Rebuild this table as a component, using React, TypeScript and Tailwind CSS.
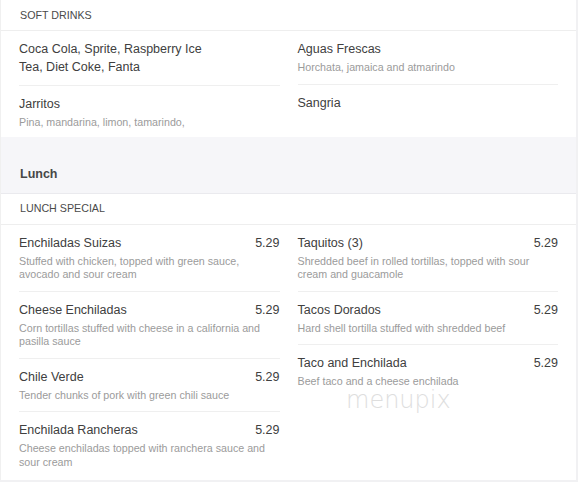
import React from 'react';

type Item = { name: string; desc?: string; price?: string };

const drinksLeft: Item[] = [
  { name: 'Coca Cola, Sprite, Raspberry Ice Tea, Diet Coke, Fanta' },
  { name: 'Jarritos', desc: 'Pina, mandarina, limon, tamarindo,' },
];

const drinksRight: Item[] = [
  { name: 'Aguas Frescas', desc: 'Horchata, jamaica and atmarindo' },
  { name: 'Sangria' },
];

const lunchLeft: Item[] = [
  { name: 'Enchiladas Suizas', price: '5.29', desc: 'Stuffed with chicken, topped with green sauce, avocado and sour cream' },
  { name: 'Cheese Enchiladas', price: '5.29', desc: 'Corn tortillas stuffed with cheese in a california and pasilla sauce' },
  { name: 'Chile Verde', price: '5.29', desc: 'Tender chunks of pork with green chili sauce' },
  { name: 'Enchilada Rancheras', price: '5.29', desc: 'Cheese enchiladas topped with ranchera sauce and sour cream' },
];

const lunchRight: Item[] = [
  { name: 'Taquitos (3)', price: '5.29', desc: 'Shredded beef in rolled tortillas, topped with sour cream and guacamole' },
  { name: 'Tacos Dorados', price: '5.29', desc: 'Hard shell tortilla stuffed with shredded beef' },
  { name: 'Taco and Enchilada', price: '5.29', desc: 'Beef taco and a cheese enchilada' },
];

function MenuItem({ item, last }: { item: Item; last: boolean }) {
  return (
    <div className={last ? 'pt-[9px] pb-[7px]' : 'pt-[9px] pb-[9px] border-b border-[#efefef]'}>
      <div className="flex justify-between text-[12.5px] leading-[18px] text-[#404040]">
        <span className="max-w-[200px]">{item.name}</span>
        {item.price && <span>{item.price}</span>}
      </div>
      {item.desc && (
        <p className="mt-[3px] text-[10.7px] leading-[13.5px] text-[#9b9b9b]">{item.desc}</p>
      )}
    </div>
  );
}

function Column({ items }: { items: Item[] }) {
  return (
    <div className="flex flex-col">
      {items.map((it, i) => (
        <MenuItem key={it.name} item={it} last={i === items.length - 1} />
      ))}
    </div>
  );
}

function SectionHeader({ title }: { title: string }) {
  return (
    <div className="h-[31px] flex items-center px-[19px] border-b border-[#eeeeee] text-[10.7px] uppercase text-[#4a4a4a]">
      {title}
    </div>
  );
}

export default function App() {
  return (
    <div className="w-[578px] h-[482px] overflow-hidden bg-[#f1f1f3] font-['Liberation_Sans',Arial,sans-serif]">
      <div className="relative w-[576px] h-[480px] bg-white border-l border-[#f0f0f0]">
        <SectionHeader title="Soft Drinks" />
        <div className="grid grid-cols-2 gap-x-[18px] px-[18px]">
          <Column items={drinksLeft} />
          <Column items={drinksRight} />
        </div>

        <div className="h-[57px] flex items-end pb-[10px] px-[19px] bg-[#f6f6f9] border-b border-[#eaeaee]">
          <h2 className="text-[12.5px] leading-[18px] font-bold text-[#474747]">Lunch</h2>
        </div>

        <SectionHeader title="Lunch Special" />
        <div className="grid grid-cols-2 gap-x-[18px] px-[18px]">
          <Column items={lunchLeft} />
          <Column items={lunchRight} />
        </div>

        <div className="absolute left-[345px] top-[388px] text-[24px] leading-none font-extralight text-[#dedede] font-['DejaVu_Sans',sans-serif] select-none">
          menupix
        </div>
      </div>
    </div>
  );
}
